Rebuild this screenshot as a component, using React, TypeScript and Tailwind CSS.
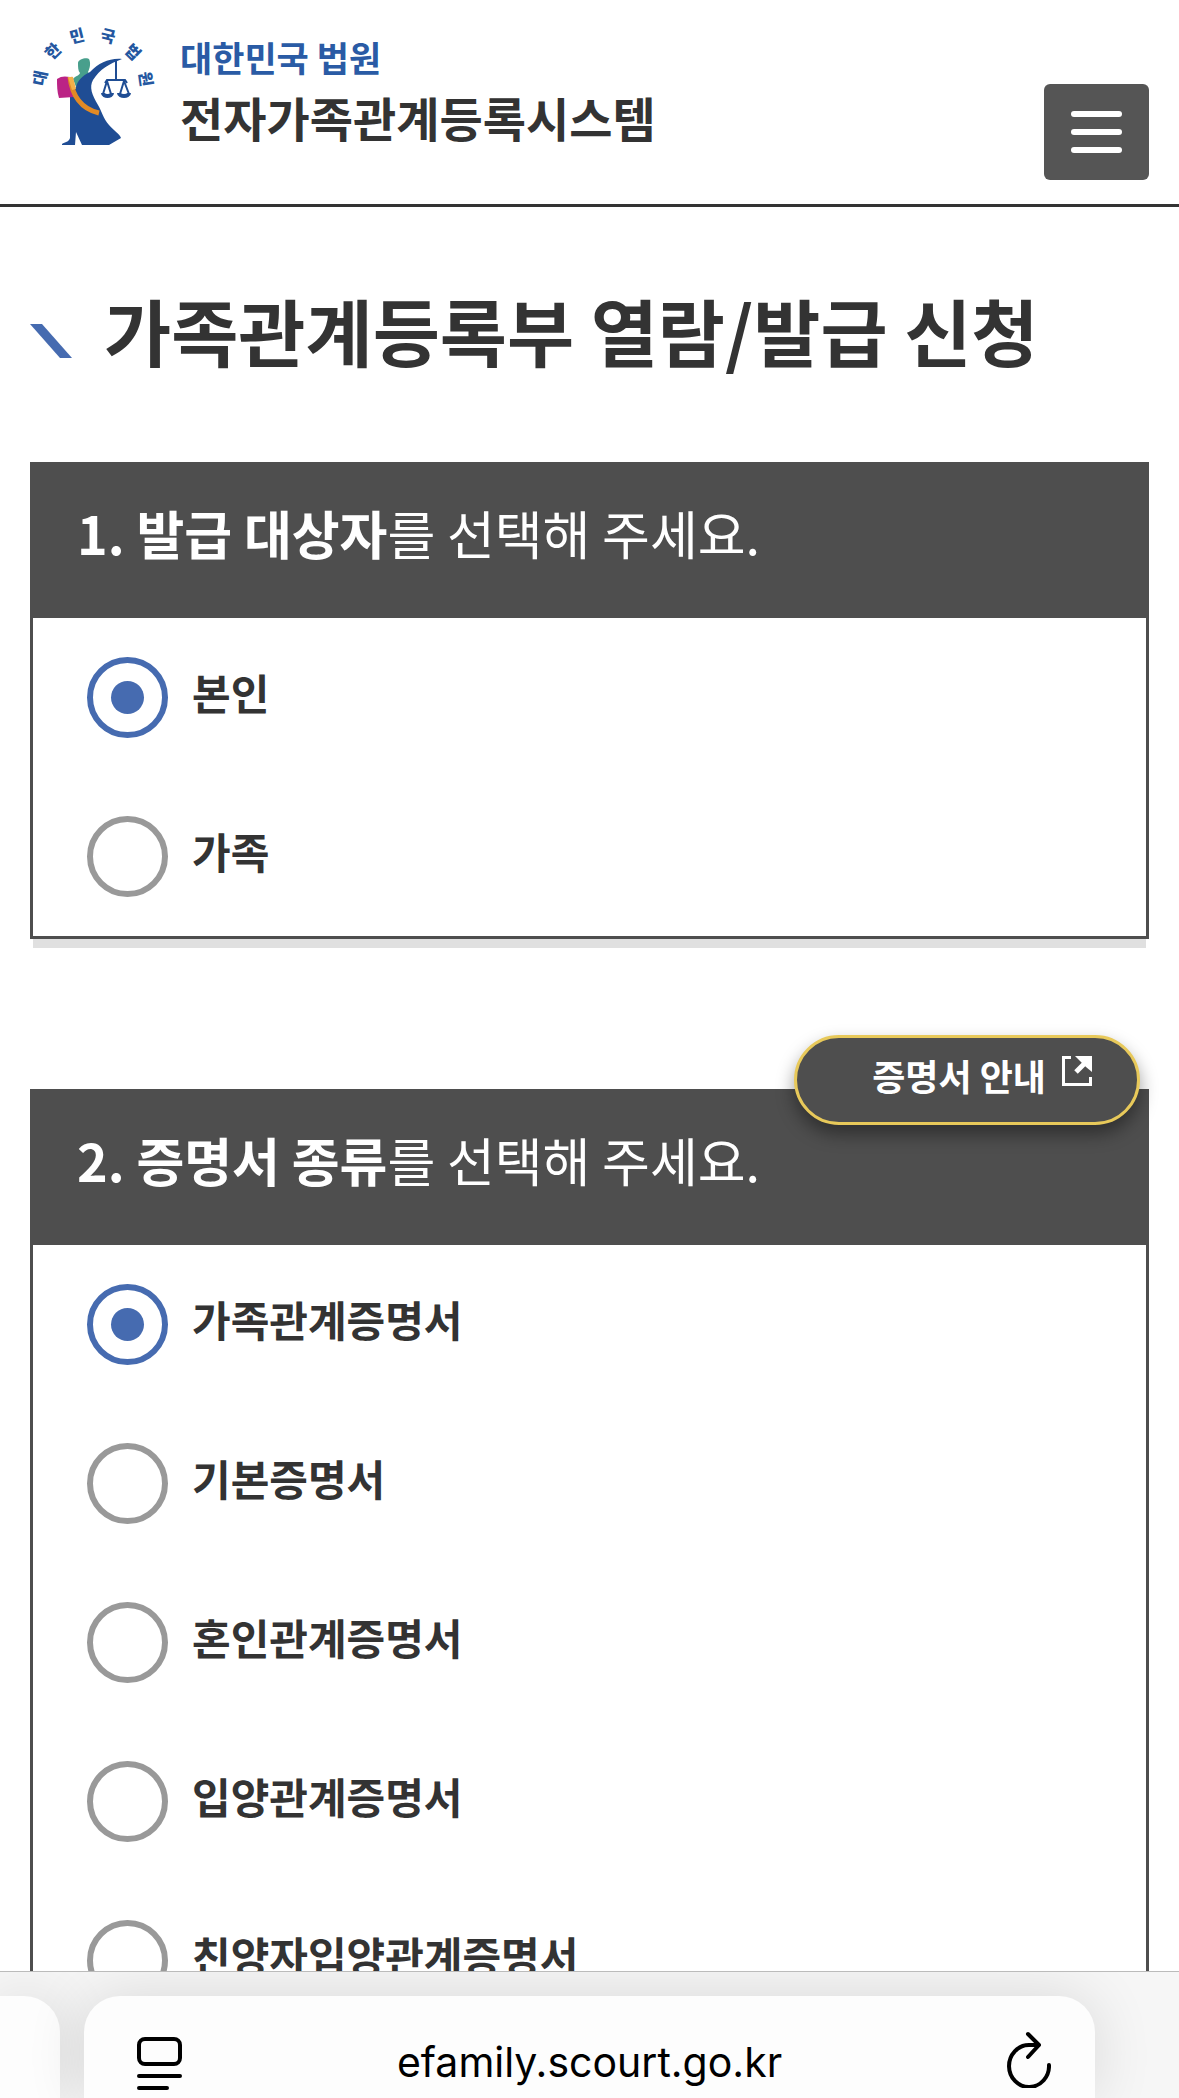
import { useState } from 'react';

interface Option {
  id: string;
  label: string;
}

const targets: Array<Option> = [
  { id: 'self', label: '본인' },
  { id: 'family', label: '가족' },
];

const certificates: Array<Option> = [
  { id: 'family-relation', label: '가족관계증명서' },
  { id: 'basic', label: '기본증명서' },
  { id: 'marriage', label: '혼인관계증명서' },
  { id: 'adoption', label: '입양관계증명서' },
  { id: 'full-adoption', label: '친양자입양관계증명서' },
];

function CourtEmblem() {
  return (
    <svg
      viewBox="30 20 126 128"
      className="w-[126px] h-[128px] shrink-0 overflow-visible"
      aria-hidden="true"
    >
      <g
        fill="#2457a0"
        fontSize="16"
        fontWeight="900"
        textAnchor="middle"
      >
        <text transform="translate(40 78) rotate(-78)" y="6">대</text>
        <text transform="translate(53 51) rotate(-45)" y="6">한</text>
        <text transform="translate(77 36) rotate(-14)" y="6">민</text>
        <text transform="translate(108 36) rotate(14)" y="6">국</text>
        <text transform="translate(133 52) rotate(45)" y="6">법</text>
        <text transform="translate(146 79) rotate(82)" y="6">원</text>
      </g>
      <path d="M78 63c0-4 9-6 11-4 2 4 1 9-1 13l2 3-14 12-3-8c2-3 6-3 7-6-2-2-2-6-2-10z" fill="#489f8c" />
      <path
        d="M122 59c-13-1-23 4-32 13-8 4-12 8-14 15l-6 7v44c-1 4-5 4-8 6v1h13l1-13 6 13h27l12-7c-1-4-8-8-12-13-6-7-7-13-11-20-6-10-9-18-5-25 7-11 16-16 29-21z"
        fill="#1f4d94"
      />
      <path d="M57 79c4-3 8-3 13-2 0 8 2 14 4 20l-15 1c-2-6-2-13-2-19z" fill="#bb2385" />
      <path
        d="M70 77c2 18 11 32 29 36"
        fill="none"
        stroke="#e28a25"
        strokeWidth="5"
      />
      <path d="M68 77l5 0 3 12-4 1z" fill="#f3b04a" />
      <g fill="none" stroke="#1f4d94" strokeWidth="2">
        <path d="M116 59v22M105 83l2-3h18l2 3" />
        <path d="M107 81l-4 13M107 81l4 13M124 81l-4 13M124 81l5 13" />
        <path d="M103 93c0 4 9 4 9 0M119 93c0 4 10 4 10 0" strokeWidth="4" />
      </g>
    </svg>
  );
}

function OptionList({ name, options }: { name: string; options: Array<Option> }) {
  const [selected, setSelected] = useState(options[0].id);
  return (
    <div className="flex flex-col gap-[78px] py-[39px] px-[54px]">
      {options.map((option) => (
        <label
          key={option.id}
          className="flex items-center gap-6 text-[42px] leading-[60px] font-bold"
        >
          <input
            type="radio"
            name={name}
            value={option.id}
            checked={selected === option.id}
            onChange={() => setSelected(option.id)}
            className="appearance-none grid place-content-center shrink-0 size-[81px] rounded-full border-6 border-[#999] checked:border-[#466bb0] before:size-[33px] before:rounded-full checked:before:bg-[#466bb0]"
          />
          <span className="pb-3">{option.label}</span>
        </label>
      ))}
    </div>
  );
}

function Step({
  number,
  title,
  name,
  options,
  children,
}: {
  number: number;
  title: string;
  name: string;
  options: Array<Option>;
  children?: React.ReactNode;
}) {
  return (
    <section className="relative border-3 border-[#4e4e4e] shadow-[0_12px_0_-3px_#e0e0e0]">
      <h2 className="h-[153px] px-11 pt-[30px] bg-[#4e4e4e] text-white text-[52px] leading-[76px] font-normal">
        <strong className="font-bold">
          {number}. {title}
        </strong>
        를 선택해 주세요.
      </h2>
      {children}
      <OptionList name={name} options={options} />
    </section>
  );
}

function Toolbar() {
  return (
    <footer className="flex gap-6 h-[127px] shrink-0 overflow-hidden border-t border-[#bbb] bg-[#f6f6f6] pt-6">
      <div className="w-[60px] shrink-0 rounded-tr-[36px] bg-[#fdfdfd] shadow-[0_0_60px_rgba(0,0,0,0.12)]" />
      <div className="flex flex-1 justify-between items-start rounded-t-[36px] bg-[#fdfdfd] px-9 pt-8 text-black shadow-[0_0_60px_rgba(0,0,0,0.12)]">
        <button aria-label="페이지 메뉴" className="flex justify-end w-[62px] py-2">
          <svg viewBox="0 0 46 56" className="w-[46px] h-[56px]" fill="none" stroke="currentColor" strokeWidth="4" strokeLinecap="round">
            <rect x="3" y="3" width="41" height="25" rx="6" />
            <path d="M3 40h41M3 52h28" />
          </svg>
        </button>
        <button className="py-1 font-[Inter,sans-serif] text-[41px] leading-[60px]">
          efamily.scourt.go.kr
        </button>
        <button aria-label="새로고침" className="flex justify-center w-[62px]">
          <svg viewBox="0 0 46 60" className="w-[46px] h-[60px]" fill="none" stroke="currentColor" strokeWidth="4" strokeLinecap="round" strokeLinejoin="round">
            <path d="M44 37a20 21 0 1 1-20-20h10M23 6l11 11-11 12" />
          </svg>
        </button>
      </div>
      <div className="w-[60px] shrink-0" />
    </footer>
  );
}

export default function App() {
  return (
    <div className="flex flex-col h-screen bg-white text-[#333] font-['Noto_Sans_CJK_KR',sans-serif]">
      <header className="flex justify-between items-start shrink-0 h-[207px] border-b-3 border-[#333] px-[30px]">
        <a href="#" className="flex items-start gap-6 pt-5">
          <CourtEmblem />
          <span className="flex flex-col pt-3">
            <span className="text-[35px] leading-[50px] font-bold text-[#2a5ba5]">
              대한민국 법원
            </span>
            <span className="text-[47px] leading-[70px] font-bold">
              전자가족관계등록시스템
            </span>
          </span>
        </a>
        <button
          aria-label="전체메뉴"
          className="flex flex-col items-center justify-center gap-3 mt-[84px] w-[105px] h-24 rounded-[6px] bg-[#555]"
        >
          <span className="w-[51px] h-1.5 rounded-full bg-white" />
          <span className="w-[51px] h-1.5 rounded-full bg-white" />
          <span className="w-[51px] h-1.5 rounded-full bg-white" />
        </button>
      </header>

      <main className="flex-1 min-h-0 overflow-hidden px-[30px]">
        <div className="flex items-center gap-8 h-[255px]">
          <svg viewBox="0 0 42 34" className="w-[42px] h-[34px] mt-3" aria-hidden="true">
            <path d="M0 0h12l30 34H30z" fill="#466bb0" />
          </svg>
          <h1 className="pb-3 text-[73px] leading-[100px] font-bold">
            가족관계등록부 열람/발급 신청
          </h1>
        </div>

        <div className="flex flex-col gap-[150px]">
          <Step number={1} title="발급 대상자" name="target" options={targets} />
          <Step number={2} title="증명서 종류" name="certificate" options={certificates}>
            <a
              href="#"
              className="absolute -top-[57px] right-1.5 flex items-start gap-4 h-[90px] pl-[75px] pr-[45px] pt-[10px] rounded-full border-3 border-[#e8c95a] bg-[#4e4e4e] text-white text-[36px] leading-[54px] font-bold shadow-[0_9px_18px_rgba(0,0,0,0.4)]"
            >
              증명서 안내
              <svg viewBox="0 0 30 30" className="size-[30px] mt-2" fill="none" stroke="currentColor" strokeWidth="3">
                <path d="M9 1.5H1.5v27h27V21" />
                <path d="M14 16l9-9" strokeWidth="5" />
                <path d="M13 0h17v16l-6-5-6-6z" fill="currentColor" stroke="none" />
              </svg>
            </a>
          </Step>
        </div>
      </main>

      <Toolbar />
    </div>
  );
}
